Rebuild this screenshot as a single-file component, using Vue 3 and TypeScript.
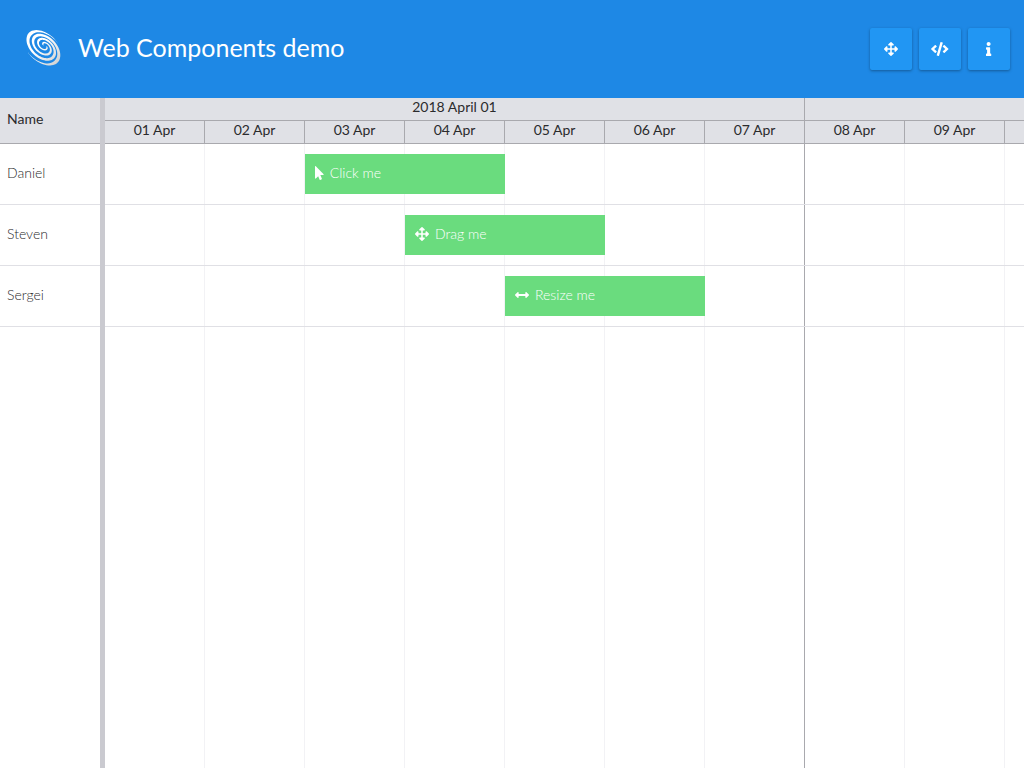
<script setup lang="ts">
type IconName = 'move' | 'code' | 'info' | 'pointer' | 'resize'

interface Task {
  resource: string
  label: string
  icon: IconName
  start: number
  days: number
}

const icons: Record<IconName, { width: number; path: string }> = {
  move: {
    width: 512,
    path: 'M352.201 425.775l-79.196 79.196c-9.373 9.373-24.568 9.373-33.941 0l-79.196-79.196c-15.119-15.119-4.411-40.971 16.971-40.97h51.162L228 284H127.196v51.162c0 21.382-25.851 32.09-40.971 16.971L7.029 272.937c-9.373-9.373-9.373-24.569 0-33.941L86.225 159.8c15.119-15.119 40.971-4.411 40.971 16.971V228H228V127.196h-51.23c-21.382 0-32.09-25.851-16.971-40.971l79.196-79.196c9.373-9.373 24.568-9.373 33.941 0l79.196 79.196c15.119 15.119 4.411 40.971-16.971 40.971h-51.162V228h100.804v-51.162c0-21.382 25.851-32.09 40.97-16.971l79.196 79.196c9.373 9.373 9.373 24.569 0 33.941L425.773 352.2c-15.119 15.119-40.971 4.411-40.97-16.971V284H284v100.804h51.23c21.382 0 32.09 25.851 16.971 40.971z',
  },
  code: {
    width: 640,
    path: 'M278.9 511.5l-61-17.7c-6.4-1.8-10-8.5-8.2-14.9L346.2 8.7c1.8-6.4 8.5-10 14.9-8.2l61 17.7c6.4 1.8 10 8.5 8.2 14.9L293.8 503.3c-1.9 6.4-8.5 10.1-14.9 8.2zm-114-112.2l43.5-46.4c4.6-4.9 4.3-12.7-.8-17.2L117 256l90.6-79.7c5.1-4.5 5.5-12.3.8-17.2l-43.5-46.4c-4.5-4.8-12.1-5.1-17-.5L3.8 247.2c-5.1 4.7-5.1 12.8 0 17.5l144.1 135.1c4.9 4.6 12.5 4.4 17-.5zm327.2.6l144.1-135.1c5.1-4.7 5.1-12.8 0-17.5L492.1 112.1c-4.8-4.5-12.4-4.3-17 .5L431.6 159c-4.6 4.9-4.3 12.7.8 17.2L523 256l-90.6 79.7c-5.1 4.5-5.5 12.3-.8 17.2l43.5 46.4c4.5 4.9 12.1 5.1 17 .6z',
  },
  info: {
    width: 192,
    path: 'M20 424.229h20V279.771H20c-11.046 0-20-8.954-20-20V212c0-11.046 8.954-20 20-20h112c11.046 0 20 8.954 20 20v212.229h20c11.046 0 20 8.954 20 20V492c0 11.046-8.954 20-20 20H20c-11.046 0-20-8.954-20-20v-47.771c0-11.046 8.954-20 20-20zM96 0C56.235 0 24 32.235 24 72s32.235 72 72 72 72-32.235 72-72S135.764 0 96 0z',
  },
  pointer: {
    width: 320,
    path: 'M302.189 329.126H196.105l55.831 135.993c3.889 9.428-.555 19.999-9.444 23.999l-49.165 21.427c-9.165 4-19.443-.571-23.332-9.714l-53.053-129.136-86.664 89.138C18.729 472.71 0 463.554 0 447.977V18.299C0 1.899 19.921-6.096 30.277 5.443l284.412 292.542c11.472 11.179 3.007 31.141-12.5 31.141z',
  },
  resize: {
    width: 512,
    path: 'M377.941 169.941V216H134.059v-46.059c0-21.382-25.851-32.09-40.971-16.971L7.029 239.029c-9.373 9.373-9.373 24.568 0 33.941l86.059 86.059c15.119 15.119 40.971 4.411 40.971-16.971V296h243.882v46.059c0 21.382 25.851 32.09 40.971 16.971l86.059-86.059c9.373-9.373 9.373-24.568 0-33.941l-86.059-86.059c-15.119-15.12-40.971-4.412-40.971 16.97z',
  },
}

const tools: { icon: IconName; label: string }[] = [
  { icon: 'move', label: 'Full screen' },
  { icon: 'code', label: 'Show code' },
  { icon: 'info', label: 'Information' },
]

const tasks: Task[] = [
  { resource: 'Daniel', label: 'Click me', icon: 'pointer', start: 3, days: 2 },
  { resource: 'Steven', label: 'Drag me', icon: 'move', start: 4, days: 2 },
  { resource: 'Sergei', label: 'Resize me', icon: 'resize', start: 5, days: 2 },
]

const weeks = ['2018 April 01']
const days = Array.from({ length: 9 }, (_, i) => `${String(i + 1).padStart(2, '0')} Apr`)

// One arm of the logo's spiral, as a closed ribbon that widens outwards.
// The eye of the spiral sits off the centre of its outer rings.
function spiralArm(offset: number, turns: number): string {
  const outer: string[] = []
  const inner: string[] = []
  const end = turns * 2 * Math.PI
  for (let t = 0; t <= end; t += 0.1) {
    const radius = 2 + (t / (2 * Math.PI)) * 10.6
    const half = Math.min(1.8, 0.8 + t * 0.1) * Math.min(1, (end - t) / 1.8)
    const angle = t + offset
    const shift = -3.2 * (1 - radius / 22)
    const point = (r: number) =>
      `${(r * Math.cos(angle)).toFixed(2)} ${(r * 0.66 * Math.sin(angle) + shift).toFixed(2)}`
    outer.push(point(radius + half))
    inner.unshift(point(radius - half))
  }
  return `M${outer.concat(inner).join('L')}Z`
}
const arms = [spiralArm(2.6, 1.9), spiralArm(2.6 + Math.PI, 1.9)]
</script>

<template>
  <div class="page">
    <header class="banner">
      <a class="brand" href="#">
        <svg class="logo" viewBox="-20 -20 40 40" aria-hidden="true">
          <defs>
            <linearGradient id="silver" gradientUnits="userSpaceOnUse" x1="-20" y1="0" x2="20" y2="0">
              <stop offset="0.4" stop-color="#fff" />
              <stop offset="1" stop-color="#d4d4d4" />
            </linearGradient>
          </defs>
          <g transform="rotate(43)" fill="url(#silver)">
            <path v-for="arm in arms" :key="arm" :d="arm" />
          </g>
        </svg>
        <h1>Web Components demo</h1>
      </a>
      <div class="tools">
        <button v-for="tool in tools" :key="tool.icon" type="button" :aria-label="tool.label">
          <svg class="icon" :viewBox="`0 0 ${icons[tool.icon].width} 512`" aria-hidden="true">
            <path :d="icons[tool.icon].path" />
          </svg>
        </button>
      </div>
    </header>

    <main class="scheduler">
      <table class="resources">
        <thead>
          <tr><th scope="col">Name</th></tr>
        </thead>
        <tbody>
          <tr v-for="task in tasks" :key="task.resource"><td>{{ task.resource }}</td></tr>
        </tbody>
      </table>
      <div class="splitter"></div>
      <section class="timeline" aria-label="Schedule">
        <div class="heading">
          <div class="weeks"><span v-for="week in weeks" :key="week">{{ week }}</span></div>
          <div class="days"><span v-for="day in days" :key="day">{{ day }}</span></div>
        </div>
        <div class="canvas">
          <div v-for="task in tasks" :key="task.resource" class="lane">
            <div class="task" :style="{ gridColumn: `${task.start} / span ${task.days}` }">
              <svg class="icon" :viewBox="`0 0 ${icons[task.icon].width} 512`" aria-hidden="true">
                <path :d="icons[task.icon].path" />
              </svg>
              <span>{{ task.label }}</span>
            </div>
          </div>
        </div>
      </section>
    </main>
  </div>
</template>

<style>
body {
  margin: 0;
}
</style>

<style scoped>
.page {
  display: flex;
  flex-direction: column;
  height: 100vh;
  overflow: hidden;
  background: #fff;
  color: #2b2b2d;
  font-family: Lato, "Open Sans", sans-serif;
  font-size: 14px;
  line-height: 20px;
}
.banner {
  display: flex;
  align-items: center;
  justify-content: space-between;
  flex: none;
  height: 98px;
  padding: 0 14px 0 23px;
  box-sizing: border-box;
  background: #1e88e5;
}
.brand {
  display: flex;
  align-items: center;
  gap: 15px;
  padding-bottom: 3px;
  color: #fff;
  text-decoration: none;
}
.logo {
  width: 40px;
  height: 40px;
}
h1 {
  margin: 0;
  padding-bottom: 2px;
  font-size: 25px;
  line-height: 30px;
  font-weight: 400;
}
.tools {
  display: flex;
  gap: 7px;
}
.tools button {
  display: flex;
  align-items: center;
  justify-content: center;
  width: 42px;
  height: 42px;
  padding: 0;
  border: 0;
  border-radius: 2px;
  background: #2196f3;
  color: #fff;
  box-shadow: 0 1px 3px rgba(0, 0, 0, 0.35);
  cursor: pointer;
}
.icon {
  flex: none;
  height: 14px;
  fill: currentColor;
}
.scheduler {
  display: flex;
  flex: 1;
  min-height: 0;
}
.resources {
  flex: none;
  align-self: flex-start;
  width: 100px;
  border-spacing: 0;
}
.resources th {
  height: 41px;
  padding: 0 7px 4px;
  border-bottom: 1px solid #a9a9ae;
  background: #e0e1e6;
  font-weight: 400;
  text-align: left;
}
.resources td {
  height: 58px;
  padding: 0 7px 2px;
  border-bottom: 1px solid #e0e0e5;
  font-weight: 300;
}
.splitter {
  flex: none;
  width: 5px;
  background: #cacad0;
}
.timeline {
  display: flex;
  flex-direction: column;
  flex: 1;
  min-width: 0;
  overflow: hidden;
}
.heading {
  background: #e0e1e6;
  text-align: center;
}
.weeks,
.days {
  display: grid;
  height: 22px;
  border-bottom: 1px solid #a9a9ae;
  line-height: 18px;
}
.weeks {
  grid-template-columns: 700px;
}
.days {
  grid-template-columns: repeat(9, 100px);
}
.weeks span,
.days span {
  border-right: 1px solid #a9a9ae;
}
.canvas {
  flex: 1;
  background:
    repeating-linear-gradient(90deg, transparent 0 699px, #a9a9ae 699px 700px),
    repeating-linear-gradient(90deg, transparent 0 99px, #f2f2f5 99px 100px);
}
.lane {
  display: grid;
  grid-template-columns: repeat(9, 100px);
  height: 60px;
  align-items: center;
  border-bottom: 1px solid #e0e0e5;
}
.task {
  display: flex;
  align-items: center;
  gap: 6px;
  height: 40px;
  padding: 0 10px 2px;
  box-sizing: border-box;
  background: #6adc7e;
  color: #fff;
  font-weight: 300;
}
</style>
